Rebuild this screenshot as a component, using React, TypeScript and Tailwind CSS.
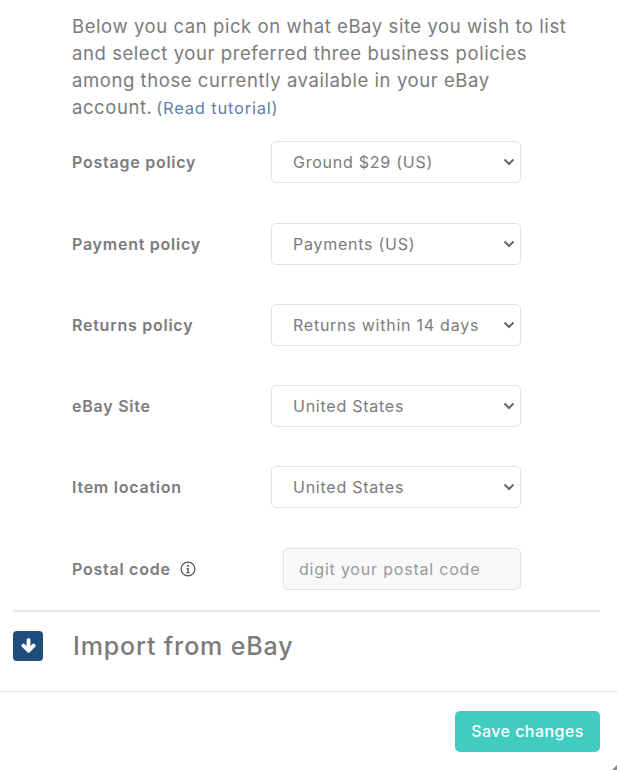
import { FaArrowDown } from "react-icons/fa";

const rows = [
  { label: "Postage policy", value: "Ground $29 (US)" },
  { label: "Payment policy", value: "Payments (US)" },
  { label: "Returns policy", value: "Returns within 14 days" },
  { label: "eBay Site", value: "United States" },
  { label: "Item location", value: "United States" },
];

export default function App() {
  return (
    <div className="relative w-[617px] h-[770px] overflow-hidden bg-white text-[#7b7b7b] font-['Inter','Liberation_Sans',sans-serif]">
      {/* Intro */}
      <p className="ml-[72px] mr-[45px] pt-[13px] text-[18.5px] leading-[27px] tracking-[0.57px]">
        Below you can pick on what eBay site you wish to list and select your preferred three business policies among those currently available in your eBay account.{" "}
        <a className="-ml-[2px] text-[16.5px] tracking-[0.8px] text-[#5f7fa6]">(Read tutorial)</a>
      </p>

      {/* Policies form */}
      <div className="mt-[19.4px] ml-[72px] w-[449px] flex flex-col gap-[39.25px]">
        {rows.map((row) => (
          <div key={row.label} className="flex items-center justify-between h-[42px]">
            <label className="text-[16px] font-semibold tracking-[0.75px]">{row.label}</label>
            <div className="relative">
              <select defaultValue={row.value} className="block appearance-none w-[250px] h-[42px] pl-[21px] pr-[24px] bg-white text-[#7b7b7b] text-[16px] tracking-[0.75px] border border-[#e3e3e3] rounded-[5px]">
                <option>{row.value}</option>
              </select>
              <svg width="12" height="8" viewBox="0 0 12 8" fill="none" className="absolute right-[6px] top-[17px] pointer-events-none">
                <path d="M1.5 1.5 6 6l4.5-4.5" stroke="#666" strokeWidth="2" />
              </svg>
            </div>
          </div>
        ))}
        <div className="flex items-center justify-between h-[42px]">
          <label className="flex items-center gap-[9px] text-[16px] font-semibold tracking-[0.75px]">
            Postal code
            <svg width="16" height="16" viewBox="0 0 16 16" fill="none" className="text-[#555]">
              <circle cx="8" cy="8" r="6.9" stroke="currentColor" strokeWidth="1.3" />
              <circle cx="8" cy="4.8" r="1.1" fill="currentColor" />
              <path d="M6.4 7h2.3v4.2h1v1H6.3v-1h1V8h-.9z" fill="currentColor" />
            </svg>
          </label>
          <input disabled placeholder="digit your postal code" className="w-[238px] h-[42px] px-[15px] bg-[#f8f8f8] text-[16px] tracking-[0.8px] placeholder:text-[#999] border border-[#e3e3e3] rounded-[5px]" />
        </div>
      </div>

      {/* Import section */}
      <div className="mt-[20px] mx-[13px] w-[587px] h-[81px] pt-[19px] border-t-2 border-[#e6e6e6] flex items-start">
        <div className="w-[30px] h-[30px] rounded-[4px] bg-[#1f4e7d] flex items-center justify-center">
          <FaArrowDown size={15} color="white" stroke="white" strokeWidth={50} />
        </div>
        <h2 className="ml-[30px] h-[30px] leading-[30px] text-[25px] font-medium tracking-[0.85px]">Import from eBay</h2>
      </div>

      {/* Footer */}
      <div className="border-t border-[#e6e6e6] h-[78px] flex justify-end items-start pt-[19px] pr-[17px]">
        <button className="w-[145px] h-[41px] rounded-[5px] bg-[#40ccc0] text-white text-[16px] font-medium tracking-[0.45px]">Save changes</button>
      </div>

      {/* Corner of whatever sits behind the modal */}
      <svg width="5" height="5" viewBox="0 0 5 5" className="absolute right-0 bottom-0">
        <path d="M5 0v5H0z" fill="#8a8a8a" />
      </svg>
    </div>
  );
}
